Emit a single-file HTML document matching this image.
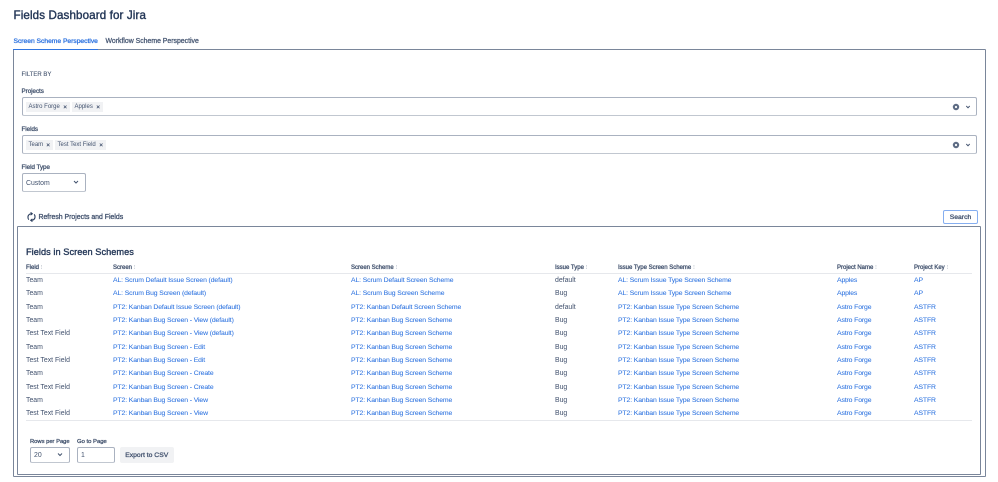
<!DOCTYPE html>
<html lang="en"><head><meta charset="utf-8"><title>Fields Dashboard for Jira</title>
<style>
html,body{margin:0;padding:0;background:#fff}
body{width:998px;height:482px;overflow:hidden;position:relative;font-family:"Liberation Sans",sans-serif;color:#172b4d}
#w{position:absolute;left:0;top:0;width:998px;height:482px;background:#fff;filter:blur(.25px)}
.a{position:absolute;white-space:nowrap;line-height:12px}
.box{position:absolute;box-sizing:border-box}
.r{position:absolute;left:0;width:998px;height:12px}
.c{font-size:6.9px;color:#42526e}
.l{font-size:6.85px;letter-spacing:-.12px;color:#2f74e0;-webkit-text-stroke:.06px #2f74e0}
.h{font-size:6px;color:#42526e;-webkit-text-stroke:.3px #42526e;top:261.5px}
.h i{font-style:normal;color:#a5adba;-webkit-text-stroke:0}
.lab{font-size:6.2px;color:#44546f;-webkit-text-stroke:.3px #44546f}
.inp{border:1px solid #aab2c0;border-bottom:1.5px solid #c1c7d0;border-radius:2px;background:#fff}
.tag{position:absolute;height:9.5px;background:#f1f2f4;font-size:6px;line-height:11px;color:#42526e;padding-left:2.5px;white-space:nowrap;box-sizing:border-box}
.tag b{position:absolute;right:3px;top:0;font-size:6.5px;color:#42526e}
.x1{left:26px}.x2{left:113px}.x3{left:351px}.x4{left:555px}.x5{left:618px}.x6{left:837px}.x7{left:914px}
</style></head><body><div id="w">
<div class="a" style="left:13.5px;top:9px;font-size:11.6px;line-height:13px;color:#253858;letter-spacing:.12px;-webkit-text-stroke:.4px #253858">Fields Dashboard for Jira</div>
<div class="a" style="left:13.5px;top:36px;font-size:6.7px;color:#2f74e0;-webkit-text-stroke:.3px #2f74e0">Screen Scheme Perspective</div>
<div class="a" style="left:105.5px;top:36px;font-size:6.9px;color:#4a5a75;-webkit-text-stroke:.3px #4a5a75">Workflow Scheme Perspective</div>
<div class="box" style="left:13px;top:49px;width:972.5px;height:428px;border:1px solid #7a869a;border-radius:1px"></div>
<div class="box" style="left:13px;top:48.5px;width:85px;height:1.5px;background:#2f74e0"></div>
<div class="a" style="left:21.5px;top:69px;font-size:6px;color:#44546f;-webkit-text-stroke:.1px #44546f">FILTER BY</div>
<div class="a lab" style="left:21.5px;top:86px">Projects</div>
<div class="box inp" style="left:21.5px;top:97px;width:955px;height:19px"></div>
<div class="tag" style="left:26px;top:102px;width:44px">Astro Forge<b>×</b></div>
<div class="tag" style="left:72px;top:102px;width:31px">Apples<b>×</b></div>
<div class="a lab" style="left:21.5px;top:124px">Fields</div>
<div class="box inp" style="left:21.5px;top:135px;width:955px;height:19px"></div>
<div class="tag" style="left:26px;top:140px;width:27px">Team<b>×</b></div>
<div class="tag" style="left:55px;top:140px;width:51px">Test Text Field<b>×</b></div>
<svg class="box" style="left:950px;top:100px" width="24" height="14" viewBox="0 0 24 14"><circle cx="6" cy="7" r="3.2" fill="#5e6c84"/><circle cx="6" cy="7" r="1.1" fill="#fff"/><path d="M16.3 6l1.7 1.8L19.7 6" fill="none" stroke="#42526e" stroke-width="1"/></svg>
<svg class="box" style="left:950px;top:138px" width="24" height="14" viewBox="0 0 24 14"><circle cx="6" cy="7" r="3.2" fill="#5e6c84"/><circle cx="6" cy="7" r="1.1" fill="#fff"/><path d="M16.3 6l1.7 1.8L19.7 6" fill="none" stroke="#42526e" stroke-width="1"/></svg>
<div class="a lab" style="left:21.5px;top:162px">Field Type</div>
<div class="box inp" style="left:21.5px;top:173px;width:64px;height:19px"></div>
<div class="a c" style="left:26px;top:178px">Custom</div>
<svg class="box" style="left:72px;top:179px" width="8" height="6" viewBox="0 0 8 6"><path d="M2 2l2 2 2-2" fill="none" stroke="#42526e" stroke-width="1"/></svg>
<svg class="box" style="left:26.5px;top:211.5px" width="9" height="10" viewBox="0 0 10 11"><path d="M2 8.500C.6 6.800.7 4 2.500 2.600 3.300 2 4.200 1.800 5 1.900M8 2.500c1.400 1.700 1.300 4.500-.5 5.900-.8.6-1.700.8-2.500.7" fill="none" stroke="#253858" stroke-width="1.2"/><path d="M4 .3l2 1.600-2 1.500M6 7.600l-2 1.500 2 1.600" fill="none" stroke="#253858" stroke-width="1"/></svg>
<div class="a" style="left:38.5px;top:211.5px;font-size:6.9px;color:#42526e;-webkit-text-stroke:.3px #42526e">Refresh Projects and Fields</div>
<div class="box" style="left:943px;top:210px;width:35px;height:14px;border:1px solid #85aef0;border-radius:2px;font-size:6.8px;line-height:13px;text-align:center;color:#42526e;-webkit-text-stroke:.3px #42526e">Search</div>
<div class="box" style="left:17px;top:226px;width:964px;height:249px;border:1px solid #7a869a;border-radius:1px"></div>
<div class="a" style="left:26px;top:246px;font-size:9.2px;color:#253858;letter-spacing:.05px;-webkit-text-stroke:.35px #253858">Fields in Screen Schemes</div>
<div class="a h x1">Field <i>⁝</i></div>
<div class="a h x2">Screen <i>⁝</i></div>
<div class="a h x3">Screen Scheme <i>⁝</i></div>
<div class="a h x4">Issue Type <i>⁝</i></div>
<div class="a h x5">Issue Type Screen Scheme <i>⁝</i></div>
<div class="a h x6">Project Name <i>⁝</i></div>
<div class="a h x7">Project Key <i>⁝</i></div>
<div class="box" style="left:26px;top:273px;width:946px;height:1px;background:#e6e8ec"></div>

<div class="r" style="top:275px"><div class="a c x1">Team</div><div class="a l x2">AL: Scrum Default Issue Screen (default)</div><div class="a l x3">AL: Scrum Default Screen Scheme</div><div class="a c x4">default</div><div class="a l x5">AL: Scrum Issue Type Screen Scheme</div><div class="a l x6">Apples</div><div class="a l x7">AP</div></div>
<div class="r" style="top:288px"><div class="a c x1">Team</div><div class="a l x2">AL: Scrum Bug Screen (default)</div><div class="a l x3">AL: Scrum Bug Screen Scheme</div><div class="a c x4">Bug</div><div class="a l x5">AL: Scrum Issue Type Screen Scheme</div><div class="a l x6">Apples</div><div class="a l x7">AP</div></div>
<div class="r" style="top:302px"><div class="a c x1">Team</div><div class="a l x2">PT2: Kanban Default Issue Screen (default)</div><div class="a l x3">PT2: Kanban Default Screen Scheme</div><div class="a c x4">default</div><div class="a l x5">PT2: Kanban Issue Type Screen Scheme</div><div class="a l x6">Astro Forge</div><div class="a l x7">ASTFR</div></div>
<div class="r" style="top:315px"><div class="a c x1">Team</div><div class="a l x2">PT2: Kanban Bug Screen - View (default)</div><div class="a l x3">PT2: Kanban Bug Screen Scheme</div><div class="a c x4">Bug</div><div class="a l x5">PT2: Kanban Issue Type Screen Scheme</div><div class="a l x6">Astro Forge</div><div class="a l x7">ASTFR</div></div>
<div class="r" style="top:328px"><div class="a c x1">Test Text Field</div><div class="a l x2">PT2: Kanban Bug Screen - View (default)</div><div class="a l x3">PT2: Kanban Bug Screen Scheme</div><div class="a c x4">Bug</div><div class="a l x5">PT2: Kanban Issue Type Screen Scheme</div><div class="a l x6">Astro Forge</div><div class="a l x7">ASTFR</div></div>
<div class="r" style="top:342px"><div class="a c x1">Team</div><div class="a l x2">PT2: Kanban Bug Screen - Edit</div><div class="a l x3">PT2: Kanban Bug Screen Scheme</div><div class="a c x4">Bug</div><div class="a l x5">PT2: Kanban Issue Type Screen Scheme</div><div class="a l x6">Astro Forge</div><div class="a l x7">ASTFR</div></div>
<div class="r" style="top:355px"><div class="a c x1">Test Text Field</div><div class="a l x2">PT2: Kanban Bug Screen - Edit</div><div class="a l x3">PT2: Kanban Bug Screen Scheme</div><div class="a c x4">Bug</div><div class="a l x5">PT2: Kanban Issue Type Screen Scheme</div><div class="a l x6">Astro Forge</div><div class="a l x7">ASTFR</div></div>
<div class="r" style="top:368px"><div class="a c x1">Team</div><div class="a l x2">PT2: Kanban Bug Screen - Create</div><div class="a l x3">PT2: Kanban Bug Screen Scheme</div><div class="a c x4">Bug</div><div class="a l x5">PT2: Kanban Issue Type Screen Scheme</div><div class="a l x6">Astro Forge</div><div class="a l x7">ASTFR</div></div>
<div class="r" style="top:382px"><div class="a c x1">Test Text Field</div><div class="a l x2">PT2: Kanban Bug Screen - Create</div><div class="a l x3">PT2: Kanban Bug Screen Scheme</div><div class="a c x4">Bug</div><div class="a l x5">PT2: Kanban Issue Type Screen Scheme</div><div class="a l x6">Astro Forge</div><div class="a l x7">ASTFR</div></div>
<div class="r" style="top:395px"><div class="a c x1">Team</div><div class="a l x2">PT2: Kanban Bug Screen - View</div><div class="a l x3">PT2: Kanban Bug Screen Scheme</div><div class="a c x4">Bug</div><div class="a l x5">PT2: Kanban Issue Type Screen Scheme</div><div class="a l x6">Astro Forge</div><div class="a l x7">ASTFR</div></div>
<div class="r" style="top:408px"><div class="a c x1">Test Text Field</div><div class="a l x2">PT2: Kanban Bug Screen - View</div><div class="a l x3">PT2: Kanban Bug Screen Scheme</div><div class="a c x4">Bug</div><div class="a l x5">PT2: Kanban Issue Type Screen Scheme</div><div class="a l x6">Astro Forge</div><div class="a l x7">ASTFR</div></div>

<div class="box" style="left:26px;top:420px;width:946px;height:1px;background:#e6e8ec"></div>
<div class="a lab" style="left:30px;top:436px;font-size:5.8px">Rows per Page</div>
<div class="a lab" style="left:77px;top:436px;font-size:5.9px">Go to Page</div>
<div class="box inp" style="left:29.5px;top:447px;width:40px;height:16px"></div>
<div class="a c" style="left:34px;top:449.5px">20</div>
<svg class="box" style="left:56px;top:452px" width="8" height="6" viewBox="0 0 8 6"><path d="M2 1.500l2 2 2-2" fill="none" stroke="#42526e" stroke-width="1"/></svg>
<div class="box inp" style="left:77px;top:447px;width:38px;height:16px"></div>
<div class="a c" style="left:81px;top:449.5px">1</div>
<div class="box" style="left:119.5px;top:447px;width:54.5px;height:16px;background:#f1f2f4;border-radius:2px;font-size:6.8px;line-height:17px;text-align:center;color:#42526e;-webkit-text-stroke:.3px #42526e">Export to CSV</div>
</div></body></html>
